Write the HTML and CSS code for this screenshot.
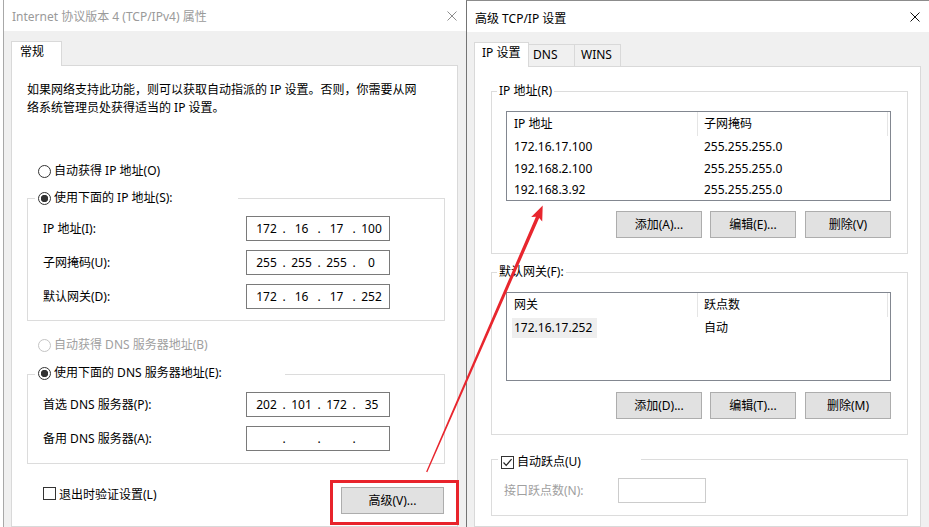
FILE: index.html
```html
<!DOCTYPE html>
<html lang="zh-CN">
<head>
<meta charset="utf-8">
<title>TCP/IP 属性</title>
<link rel="stylesheet" href="styles.css">
</head>
<body>
<div class="desk">
  <section class="win win-left">
    <header class="titlebar">
      <span class="title title-left">Internet 协议版本 4 (TCP/IPv4) 属性</span>
      <svg class="close close-inactive" width="10" height="10" viewBox="0 0 10 10"><path d="M0.5 0.5L9.5 9.5M9.5 0.5L0.5 9.5"/></svg>
    </header>
    <div class="winbody">
      <div class="tabs">
        <div class="tab tab-active tab-general">常规</div>
      </div>
      <div class="panel">
        <p class="desc">如果网络支持此功能，则可以获取自动指派的 IP 设置。否则，你需要从网<br>络系统管理员处获得适当的 IP 设置。</p>
        <div class="opt opt-auto-ip"><span class="radio"></span><span>自动获得 IP 地址(O)</span></div>
        <fieldset class="group group-ip">
          <legend class="lg-ip"><span class="opt"><span class="radio on"></span><span>使用下面的 IP 地址(S):</span></span></legend>
          <div class="fields fields-ip">
            <span class="lbl">IP 地址(I):</span>
            <div class="ipbox"><span class="seg">172</span><span class="dot">.</span><span class="seg">16</span><span class="dot">.</span><span class="seg">17</span><span class="dot">.</span><span class="seg">100</span></div>
            <span class="lbl">子网掩码(U):</span>
            <div class="ipbox"><span class="seg">255</span><span class="dot">.</span><span class="seg">255</span><span class="dot">.</span><span class="seg">255</span><span class="dot">.</span><span class="seg">0</span></div>
            <span class="lbl">默认网关(D):</span>
            <div class="ipbox"><span class="seg">172</span><span class="dot">.</span><span class="seg">16</span><span class="dot">.</span><span class="seg">17</span><span class="dot">.</span><span class="seg">252</span></div>
          </div>
        </fieldset>
        <div class="opt opt-auto-dns disabled"><span class="radio"></span><span>自动获得 DNS 服务器地址(B)</span></div>
        <fieldset class="group group-dns">
          <legend class="lg-dns"><span class="opt"><span class="radio on"></span><span>使用下面的 DNS 服务器地址(E):</span></span></legend>
          <div class="fields fields-dns">
            <span class="lbl">首选 DNS 服务器(P):</span>
            <div class="ipbox"><span class="seg">202</span><span class="dot">.</span><span class="seg">101</span><span class="dot">.</span><span class="seg">172</span><span class="dot">.</span><span class="seg">35</span></div>
            <span class="lbl">备用 DNS 服务器(A):</span>
            <div class="ipbox"><span class="seg"></span><span class="dot">.</span><span class="seg"></span><span class="dot">.</span><span class="seg"></span><span class="dot">.</span><span class="seg"></span></div>
          </div>
        </fieldset>
        <div class="bottom-row">
          <div class="check"><span class="box"></span><span>退出时验证设置(L)</span></div>
          <button class="btn btn-adv">高级(V)...</button>
        </div>
      </div>
    </div>
  </section>

  <section class="win win-right">
    <header class="titlebar">
      <span class="title title-right">高级 TCP/IP 设置</span>
      <svg class="close" width="10" height="10" viewBox="0 0 10 10"><path d="M0.5 0.5L9.5 9.5M9.5 0.5L0.5 9.5"/></svg>
    </header>
    <div class="winbody">
      <div class="tabs">
        <div class="tab tab-active tab-ip">IP 设置</div>
        <div class="tab tab-dns">DNS</div>
        <div class="tab tab-wins">WINS</div>
      </div>
      <div class="panel">
        <fieldset class="group rgroup rgroup-ip">
          <legend class="lg-plain">IP 地址(R)</legend>
          <div class="list list-ip">
            <div class="lrow lhead"><span>IP 地址</span><span>子网掩码</span></div>
            <div class="lrow"><span>172.16.17.100</span><span>255.255.255.0</span></div>
            <div class="lrow"><span>192.168.2.100</span><span>255.255.255.0</span></div>
            <div class="lrow"><span>192.168.3.92</span><span>255.255.255.0</span></div>
          </div>
          <div class="btnrow btnrow-ip">
            <button class="btn btn-sm">添加(A)...</button>
            <button class="btn btn-sm">编辑(E)...</button>
            <button class="btn btn-sm btn-last">删除(V)</button>
          </div>
        </fieldset>
        <fieldset class="group rgroup rgroup-gw">
          <legend class="lg-plain">默认网关(F):</legend>
          <div class="list list-gw">
            <div class="lrow lhead"><span>网关</span><span>跃点数</span></div>
            <div class="lrow"><span class="cell-sel"><span class="sel">172.16.17.252</span></span><span>自动</span></div>
          </div>
          <div class="btnrow btnrow-gw">
            <button class="btn btn-sm">添加(D)...</button>
            <button class="btn btn-sm">编辑(T)...</button>
            <button class="btn btn-sm btn-last">删除(M)</button>
          </div>
        </fieldset>
        <fieldset class="group rgroup rgroup-hop">
          <legend class="lg-check"><span class="check"><span class="box box-on"><svg width="11" height="11" viewBox="0 0 11 11"><path d="M1.5 5.5L4.2 8.3L9.6 2.2"/></svg></span><span>自动跃点(U)</span></span></legend>
          <div class="hoprow">
            <span class="lbl lbl-dis">接口跃点数(N):</span>
            <span class="hopbox"></span>
          </div>
        </fieldset>
      </div>
    </div>
  </section>
</div>

<div class="redbox"></div>
<svg class="arrow" width="929" height="527" viewBox="0 0 929 527">
  <polygon points="426.1,471.7 535.9,216.7 531.2,216.9 542.7,205.5 542.2,221.6 539.2,218.1 427.3,472.3"/>
</svg>
</body>
</html>
```

FILE: styles.css
```css
* { box-sizing: border-box; }

html, body { margin: 0; padding: 0; }

body {
  width: 929px;
  height: 527px;
  overflow: hidden;
  position: relative;
  background: #ffffff;
  color: #000000;
  font-family: "Noto Sans", "Noto Sans CJK SC", sans-serif;
  font-size: 12px;
  line-height: 18px;
}

.desk {
  display: flex;
  height: 527px;
  padding-left: 3px;
}

.win {
  display: flex;
  flex-direction: column;
  height: 100%;
}

.win-left {
  width: 463px;
  border-left: 1px solid #a8a8a8;
}

.win-right {
  flex: 1;
  border-left: 1px solid #747474;
  border-top: 1px solid #8c8c8c;
}

.titlebar {
  flex: none;
  height: 31px;
  background: #ffffff;
  display: flex;
  align-items: center;
  justify-content: space-between;
  padding: 0 9px 0 8px;
}

.title-left { color: #9a9a9a; margin-top: 2px; }
.title-right { margin-top: 4px; }

.close { fill: none; stroke: #111; stroke-width: 1; margin-top: 1px; }
.close-inactive { stroke: #8d8d8d; }

.winbody {
  flex: 1;
  background: #f0f0f0;
  padding: 10px 8px 0 7px;
  display: flex;
  flex-direction: column;
}

.tabs {
  flex: none;
  height: 24px;
  display: flex;
  align-items: flex-end;
}

.tab {
  height: 22px;
  border: 1px solid #d9d9d9;
  border-bottom: none;
  background: #f0f0f0;
  padding: 1px 0 0 5px;
}

.tab-active {
  height: 25px;
  margin-bottom: -1px;
  background: #ffffff;
  position: relative;
  z-index: 1;
  padding: 1px 0 0 7px;
}

.tab-general { width: 51px; padding-left: 8px; }
.tab-ip { width: 55px; }
.tab-dns { width: 46px; border-left: none; padding-left: 4px; }
.tab-wins { width: 46px; border-left: none; padding-left: 6px; }

.panel {
  flex: 1;
  background: #ffffff;
  border: 1px solid #d9d9d9;
  display: flex;
  flex-direction: column;
  align-items: flex-start;
}

.desc { margin: 15px 0 0 15px; }

.opt {
  display: flex;
  align-items: center;
  gap: 3px;
  height: 18px;
}

.radio {
  width: 13px;
  height: 13px;
  border: 1px solid #333333;
  border-radius: 50%;
  background: #ffffff;
}

.radio.on {
  background: radial-gradient(circle closest-side, #333333 0, #333333 3.4px, #ffffff 4px);
}

.disabled { color: #a0a0a0; }
.disabled .radio { border-color: #c4c4c4; }

.opt-auto-ip { margin: 45px 0 0 26px; }
.opt-auto-dns { margin: 15px 0 0 26px; }

.group {
  margin: 0;
  padding: 0;
  border: 1px solid #dcdcdc;
  min-width: 0;
}

.group legend { padding: 0; }

.group-ip { margin: 9px 0 0 15px; width: 418px; }
.group-dns { margin: 10px 0 0 15px; width: 418px; }

.lg-ip { margin-left: 7px; width: 203px; padding-left: 3px !important; }
.lg-dns { margin-left: 7px; width: 250px; padding: 0 0 3px 3px !important; }

.fields {
  display: grid;
  grid-template-columns: 1fr 144px;
  grid-auto-rows: 25px;
  row-gap: 9px;
  align-items: center;
  padding: 9px 54px 11px 15px;
}

.fields-dns { padding-top: 7px; padding-bottom: 12px; }

.ipbox {
  height: 25px;
  border: 1px solid #7a7a7a;
  display: flex;
  align-items: center;
  padding-left: 6px;
}

.seg { width: 27px; text-align: center; }
.dot { width: 8px; text-align: center; }

.bottom-row {
  align-self: stretch;
  display: flex;
  justify-content: space-between;
  align-items: flex-start;
  margin: 22px 13px 0 31px;
}

.check {
  display: flex;
  align-items: flex-start;
  gap: 3px;
}

.box {
  width: 13px;
  height: 13px;
  border: 1px solid #333333;
  background: #ffffff;
  margin-top: 1px;
  display: flex;
  align-items: center;
  justify-content: center;
}

.box svg { fill: none; stroke: #222; stroke-width: 1.2; }

.btn {
  font: inherit;
  color: #000000;
  background: #e1e1e1;
  border: 1px solid #adadad;
  border-radius: 0;
  height: 27px;
  padding: 0;
  line-height: 18px;
}

.btn-adv { width: 103px; margin-top: 1px; }
.btn-sm { width: 86px; }
.btn-last { margin-left: 1px; }

/* right dialog */
.rgroup { margin-left: 16px; width: 417px; }
.rgroup-ip { margin-top: 15px; }
.rgroup-gw { margin-top: 9px; }
.rgroup-hop { margin-top: 12px; }

.lg-plain { margin-left: 5px; padding: 0 2px !important; }

.lg-check { margin-left: 6px; width: 143px; padding: 6px 0 0 3px !important; }
.lg-check .check { align-items: center; }
.lg-check .box { margin-top: 0; }

.list {
  margin: 11px 0 0 14px;
  width: 385px;
  height: 90px;
  border: 1px solid #828790;
  background: #ffffff;
}

.list-gw { height: 89px; }

.lrow {
  display: grid;
  grid-template-columns: 191px 190px;
  height: 21.5px;
  line-height: 21.5px;
}

.lrow span { padding-left: 7px; white-space: nowrap; }
.lrow span + span { padding-left: 6px; }

.lhead { height: 24px; line-height: 24px; }
.lhead span { border-right: 1px solid #e5e5e5; }

.lrow .cell-sel { padding-left: 5px; display: flex; align-items: center; }
.lrow .sel {
  padding: 0 5px 0 2px;
  height: 20px;
  line-height: 20px;
  background: #eeeeee;
}

.btnrow {
  display: flex;
  justify-content: flex-end;
  gap: 8px;
  padding-right: 16px;
  margin-bottom: 15px;
}

.btnrow-ip { margin-top: 10px; }
.btnrow-gw { margin-top: 11px; }

.hoprow {
  display: flex;
  align-items: center;
  padding: 7px 0 12px 12px;
}

.lbl-dis { color: #a0a0a0; width: 114px; }

.hopbox {
  width: 88px;
  height: 25px;
  border: 1px solid #cccccc;
  background: #ffffff;
}

/* annotation overlays */
.redbox {
  position: absolute;
  left: 330px;
  top: 480px;
  width: 129px;
  height: 45px;
  border: 3px solid #e8232b;
}

.arrow {
  position: absolute;
  left: 0;
  top: 0;
  pointer-events: none;
}

.arrow polygon { fill: #e8262e; }
```
